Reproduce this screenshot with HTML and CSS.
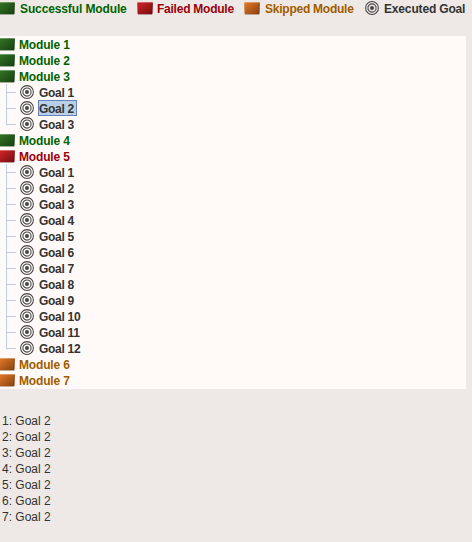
FILE: index.html
```
<!DOCTYPE html>
<html lang="en">
<head>
<meta charset="utf-8">
<title>Build modules</title>
<link rel="stylesheet" href="styles.css">
</head>
<body>
<svg class="defs" aria-hidden="true">
  <defs>
    <linearGradient id="green" x1="0" y1="0" x2="1" y2="1"><stop offset="0" stop-color="#347427"/><stop offset="1" stop-color="#17400f"/></linearGradient>
    <linearGradient id="red" x1="0" y1="0" x2="1" y2="1"><stop offset="0" stop-color="#d42528"/><stop offset="1" stop-color="#740c10"/></linearGradient>
    <linearGradient id="orange" x1="0" y1="0" x2="1" y2="1"><stop offset="0" stop-color="#e57a2a"/><stop offset="1" stop-color="#84400c"/></linearGradient>
    <symbol id="block" viewBox="0 0 16 16">
      <path d="M.8 14h14.4v1H1z" fill="#8b8583" opacity=".4"/>
      <path d="M.2 3Q.3 2.2 1.2 2.1H14.5Q16 2.2 15.9 3.2L15.5 13.4Q15.4 14.3 14.5 14.3H1.4Q.6 14.3 .5 13z"/>
      <path d="M.3 3Q.4 2.2 1.2 2.1H14.5L15.8 3.1z" fill="#fff" opacity=".3"/>
      <path d="m14.5 3.4 1.3-.3-.4 10.2-.9.6z" fill="#000" opacity=".15"/>
    </symbol>
    <symbol id="target" viewBox="0 0 16 16">
      <g fill="none" stroke="#454343" stroke-width="1.05"><circle cx="8" cy="8" r="6.4"/><circle cx="8" cy="8" r="4.1"/></g>
      <circle cx="8" cy="8" r="2" fill="#454343"/>
    </symbol>
  </defs>
</svg>
<header class="legend">
  <span class="key success"><svg class="icon"><use href="#block"/></svg><span>Successful Module</span></span>
  <span class="key failed"><svg class="icon"><use href="#block"/></svg><span>Failed Module</span></span>
  <span class="key skipped"><svg class="icon"><use href="#block"/></svg><span>Skipped Module</span></span>
  <span class="key goal"><svg class="icon"><use href="#target"/></svg><span>Executed Goal</span></span>
</header>
<main class="tree" id="tree"></main>
<section class="log" id="log"></section>
<script src="tree.js"></script>
</body>
</html>
```
FILE: styles.css
```
body {
  margin: 0;
  height: 542px;
  overflow: hidden;
  background: #eee9e6;
  color: #333;
  font: 12px/16px "Liberation Sans", Arial, sans-serif;
}
.defs { position: absolute; width: 0; height: 0; }
.icon { display: block; flex: none; width: 16px; height: 16px; }
.legend {
  display: grid;
  grid-template-columns: 138px 107px 120px 108px;
  height: 36px;
  box-sizing: border-box;
  margin-left: -1px;
  font-weight: bold;
}
.key { display: flex; gap: 5px; height: 16px; white-space: nowrap; letter-spacing: -0.24px; }
.key.success { letter-spacing: -0.12px; }
.key.goal { letter-spacing: -0.16px; }
.key.failed, .key.goal { gap: 4px; }
.key span, .module span { padding-top: 1px; }
.success { color: #006400; }
.failed { color: #9b000a; }
.skipped { color: #a15c00; }
.goal { color: #333; }
.success .icon { fill: url(#green); }
.failed .icon { fill: url(#red); }
.skipped .icon { fill: url(#orange); }
.tree {
  width: 466px;
  height: 353px;
  background: #fffaf7;
  font-weight: bold;
}
.module { display: flex; gap: 4px; height: 16px; margin-left: -1px; letter-spacing: -0.17px; }
.goals { margin: 0; padding: 0 0 0 6px; list-style: none; letter-spacing: -0.28px; }
.goals .goal { display: flex; height: 16px; }
.branch {
  flex: none;
  width: 13px;
  height: 16px;
  background: linear-gradient(#b8cfe5, #b8cfe5) 0 0 / 1px 16px no-repeat,
              linear-gradient(#b8cfe5, #b8cfe5) 0 8px / 10px 1px no-repeat;
}
.goal:last-child .branch { background-size: 1px 9px, 10px 1px; }
.goals .label { margin-left: 3px; padding: 1px 1px 0; }
.goals .selected {
  box-sizing: border-box;
  width: 39px;
  height: 16px;
  padding: 0;
  border: 1px solid #6382bf;
  background: #b8cfe5;
}
.log { padding: 24px 0 0 2px; }
```
FILE: tree.js
```
const modules = [
  ["success", 0], ["success", 0], ["success", 3], ["success", 0],
  ["failed", 12], ["skipped", 0], ["skipped", 0]
];
document.getElementById("tree").innerHTML = modules.map(([state, count], i) => {
  const goals = Array.from({ length: count }, (_, g) => {
    const selected = i === 2 && g === 1 ? " selected" : "";
    return `<li class="goal"><span class="branch"></span><svg class="icon"><use href="#target"/></svg><span class="label${selected}">Goal ${g + 1}</span></li>`;
  }).join("");
  return `<div class="module ${state}"><svg class="icon"><use href="#block"/></svg><span>Module ${i + 1}</span></div>`
    + (count ? `<ul class="goals">${goals}</ul>` : "");
}).join("");
document.getElementById("log").innerHTML =
  Array.from({ length: 7 }, (_, i) => `<div>${i + 1}: Goal 2</div>`).join("");
```
